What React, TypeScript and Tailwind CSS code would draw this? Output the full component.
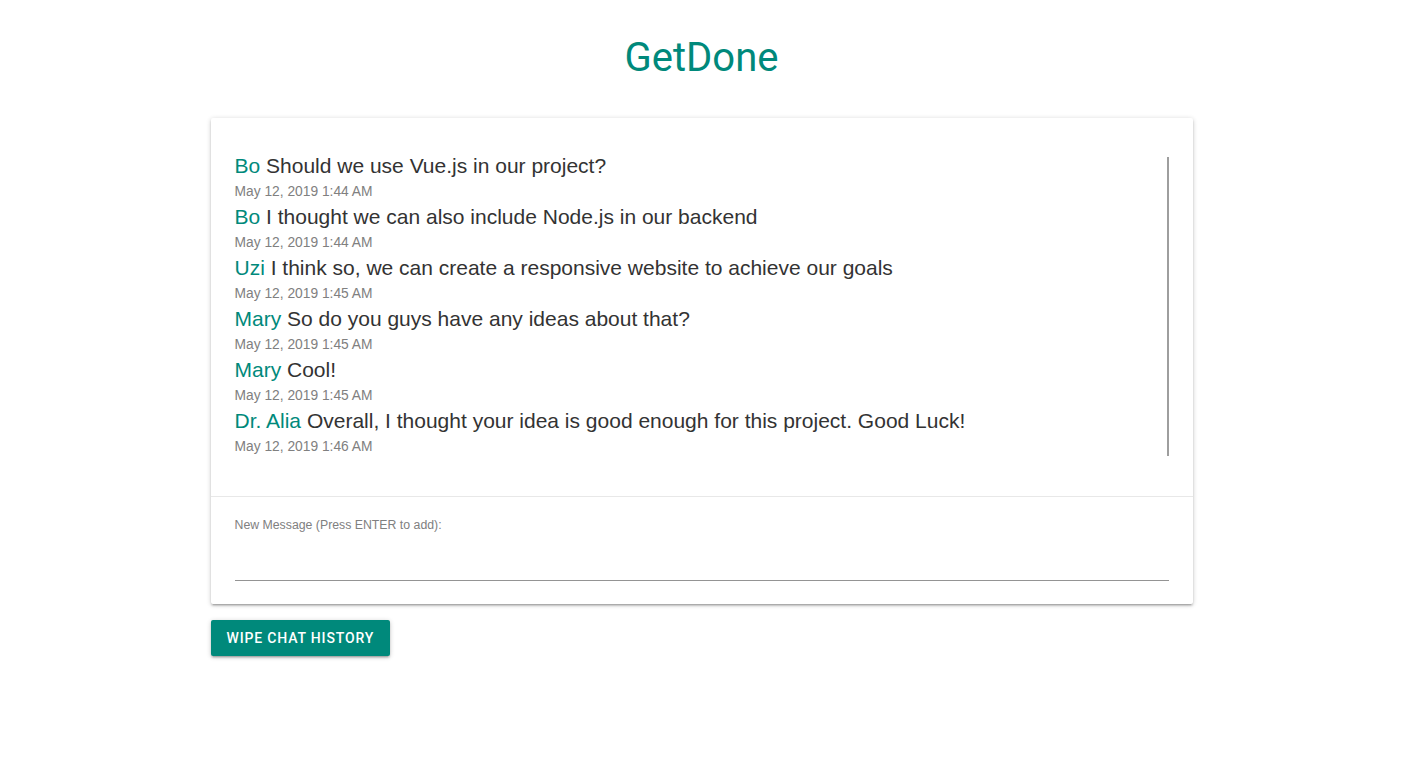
const messages = [
  { name: 'Bo', text: 'Should we use Vue.js in our project?', time: 'May 12, 2019 1:44 AM' },
  { name: 'Bo', text: 'I thought we can also include Node.js in our backend', time: 'May 12, 2019 1:44 AM' },
  { name: 'Uzi', text: 'I think so, we can create a responsive website to achieve our goals', time: 'May 12, 2019 1:45 AM' },
  { name: 'Mary', text: 'So do you guys have any ideas about that?', time: 'May 12, 2019 1:45 AM' },
  { name: 'Mary', text: 'Cool!', time: 'May 12, 2019 1:45 AM' },
  { name: 'Dr. Alia', text: 'Overall, I thought your idea is good enough for this project. Good Luck!', time: 'May 12, 2019 1:46 AM' },
];

const App = () => {
  return (
    <div className="min-h-screen bg-white font-['Liberation_Sans',Arial,sans-serif]">
      <div className="mx-auto flex w-[982px] flex-col pt-[34px]">
        <h1 className="text-center font-['Roboto',sans-serif] text-[40px] leading-[48px] text-[#00897b]">GetDone</h1>

        <div className="mt-[36px] rounded-[2px] bg-white shadow-[0_2px_2px_0_rgba(0,0,0,0.14),0_3px_1px_-2px_rgba(0,0,0,0.12),0_1px_5px_0_rgba(0,0,0,0.2)]">
          <div className="flex px-6 pt-[32px] pb-[40px]">
            <div className="flex flex-1 flex-col">
              {messages.map((m, i) => (
                <div key={i} className="flex flex-col">
                  <p className="text-[21px] leading-[32px] text-[#333333]">
                    <span className="text-[#00897b]">{m.name}</span> {m.text}
                  </p>
                  <p className="pt-[1px] text-[13.8px] leading-[18px] text-[#808080]">{m.time}</p>
                </div>
              ))}
            </div>
            <div className="mt-[7px] w-[2px] bg-[#9e9e9e]" />
          </div>

          <div className="border-t border-[#e8e8e8] px-6 pt-[20px] pb-[23px]">
            <label className="block text-[12.3px] leading-[16px] text-[#808080]">
              New Message (Press ENTER to add):
            </label>
            <input
              className="mt-[4px] block h-[44px] w-full border-b border-[#949494] text-[16px] outline-none"
              type="text"
            />
          </div>
        </div>

        <div className="mt-4">
          <button className="h-[36px] rounded-[2px] bg-[#00897b] px-4 font-['Roboto',sans-serif] text-[14px] font-medium tracking-[0.06em] text-white shadow-[0_2px_2px_0_rgba(0,0,0,0.14),0_3px_1px_-2px_rgba(0,0,0,0.12),0_1px_5px_0_rgba(0,0,0,0.2)]">
            WIPE CHAT HISTORY
          </button>
        </div>
      </div>
    </div>
  );
};

export default App;
